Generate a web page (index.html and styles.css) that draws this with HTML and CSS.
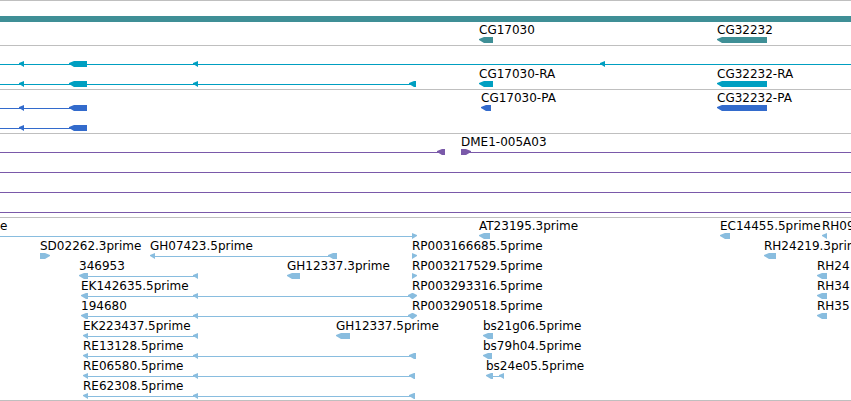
FILE: index.html
```html
<!DOCTYPE html>
<html lang="en">
<head>
<meta charset="utf-8">
<title>Genome tracks</title>
<link rel="stylesheet" href="styles.css">
</head>
<body>
<main class="browser">
  <section class="track gene">
    <div class="lane">
      <svg class="glyphs"><rect width="100%" height="6"/></svg>
    </div>
    <div class="lane">
      <span class="label" style="left:479px">CG17030</span>
      <span class="label" style="left:717px">CG32232</span>
      <svg class="glyphs"><path d="M479 3v-1l5-2H493v6H484zM717 3v-1l5-2H767v6H722z"/></svg>
    </div>
  </section>

  <section class="track transcript">
    <div class="lane">
      <svg class="glyphs"><rect y="3" width="100%" height="1"/><path d="M19 3v-1l5-2v6zM69 3v-1l5-2H87v6H74zM193 3v-1l5-2v6zM600 3v-1l5-2v6z"/></svg>
    </div>
    <div class="lane">
      <span class="label" style="left:479px">CG17030-RA</span>
      <span class="label" style="left:717px">CG32232-RA</span>
      <svg class="glyphs"><rect y="3" width="412" height="1"/><path d="M19 3v-1l5-2v6zM69 3v-1l5-2H87v6H74zM193 3v-1l5-2v6zM409 3v-1l5-2H416v6H414zM479 3v-1l5-2H493v6H484zM717 3v-1l5-2H767v6H722z"/></svg>
    </div>
  </section>

  <section class="track protein">
    <div class="lane">
      <span class="label" style="left:481px">CG17030-PA</span>
      <span class="label" style="left:717px">CG32232-PA</span>
      <svg class="glyphs"><rect y="3" width="72" height="1"/><path d="M19 3v-1l5-2v6zM69 3v-1l5-2H87v6H74zM481 3v-1l5-2H491v6H486zM717 3v-1l5-2H767v6H722z"/></svg>
    </div>
    <div class="lane">
      <svg class="glyphs"><rect y="3" width="72" height="1"/><path d="M19 3v-1l5-2v6zM69 3v-1l5-2H87v6H74z"/></svg>
    </div>
  </section>

  <section class="track insertion">
    <div class="lane">
      <span class="label" style="left:461px">DME1-005A03</span>
      <svg class="glyphs"><rect y="3" width="440" height="1"/><rect x="466" y="3" width="100%" height="1"/><path d="M437 3v-1l5-2H445v6H442zM461 0H466l5 2v1l-5 3H461z"/></svg>
    </div>
    <div class="lane"><svg class="glyphs"><rect y="3" width="100%" height="1"/></svg></div>
    <div class="lane"><svg class="glyphs"><rect y="3" width="100%" height="1"/></svg></div>
    <div class="lane"><svg class="glyphs"><rect y="3" width="100%" height="1"/></svg></div>
  </section>

  <section class="track est">
    <div class="lane">
      <span class="label" style="left:0px">e</span>
      <span class="label" style="left:479px">AT23195.3prime</span>
      <span class="label" style="left:720px">EC14455.5prime</span>
      <span class="label" style="left:822px">RH09</span>
      <svg class="glyphs"><rect y="3" width="414" height="1"/><path d="M412 0l5 2v1l-5 3zM479 3v-1l5-2H490v6H484zM720 3v-1l5-2H730v6H725zM822 3v-1l5-2v6z"/></svg>
    </div>
    <div class="lane">
      <span class="label" style="left:40px">SD02262.3prime</span>
      <span class="label" style="left:150px">GH07423.5prime</span>
      <span class="label" style="left:412px">RP003166685.5prime</span>
      <span class="label" style="left:764px">RH24219.3prime</span>
      <svg class="glyphs"><rect x="153" y="3" width="178" height="1"/><path d="M40 0H45l5 2v1l-5 3H40zM150 3v-1l5-2v6zM328 3v-1l5-2H337v6H333zM412 0l5 2v1l-5 3zM764 3v-1l5-2H776v6H769z"/></svg>
    </div>
    <div class="lane">
      <span class="label" style="left:79px">346953</span>
      <span class="label" style="left:287px">GH12337.3prime</span>
      <span class="label" style="left:412px">RP003217529.5prime</span>
      <span class="label" style="left:817px">RH24</span>
      <svg class="glyphs"><rect x="84" y="3" width="112" height="1"/><path d="M79 3v-1l5-2H88v6H84zM193 3v-1l5-2v6zM287 3v-1l5-2H300v6H292zM412 0l5 2v1l-5 3zM817 3v-1l5-2H827v6H822z"/></svg>
    </div>
    <div class="lane">
      <span class="label" style="left:81px">EK142635.5prime</span>
      <span class="label" style="left:412px">RP003293316.5prime</span>
      <span class="label" style="left:817px">RH34</span>
      <svg class="glyphs"><rect x="84" y="3" width="328" height="1"/><path d="M81 3v-1l5-2H88v6H86zM193 3v-1l5-2v6zM408 3v-1l4-2h1l4 2v1l-4 3h-1zM817 3v-1l5-2H827v6H822z"/></svg>
    </div>
    <div class="lane">
      <span class="label" style="left:81px">194680</span>
      <span class="label" style="left:412px">RP003290518.5prime</span>
      <span class="label" style="left:817px">RH35</span>
      <svg class="glyphs"><rect x="84" y="3" width="328" height="1"/><path d="M81 3v-1l5-2H88v6H86zM193 3v-1l5-2v6zM408 3v-1l4-2h1l4 2v1l-4 3h-1zM817 3v-1l5-2H827v6H822z"/></svg>
    </div>
    <div class="lane">
      <span class="label" style="left:83px">EK223437.5prime</span>
      <span class="label" style="left:336px">GH12337.5prime</span>
      <span class="label" style="left:483px">bs21g06.5prime</span>
      <svg class="glyphs"><rect x="86" y="3" width="110" height="1"/><path d="M83 3v-1l5-2v6zM193 3v-1l5-2v6zM336 3v-1l5-2H350v6H341zM483 3v-1l5-2H493v6H488z"/></svg>
    </div>
    <div class="lane">
      <span class="label" style="left:83px">RE13128.5prime</span>
      <span class="label" style="left:483px">bs79h04.5prime</span>
      <svg class="glyphs"><rect x="86" y="3" width="326" height="1"/><path d="M83 3v-1l5-2v6zM193 3v-1l5-2v6zM409 3v-1l5-2H416v6H414zM483 3v-1l5-2H492v6H488z"/></svg>
    </div>
    <div class="lane">
      <span class="label" style="left:83px">RE06580.5prime</span>
      <span class="label" style="left:486px">bs24e05.5prime</span>
      <svg class="glyphs"><rect x="86" y="3" width="326" height="1"/><rect x="490" y="3" width="12" height="1"/><path d="M83 3v-1l5-2v6zM193 3v-1l5-2v6zM409 3v-1l5-2H415v6H414zM486 3v-1l5-2H493v6H491zM499 3v-1l5-2v6z"/></svg>
    </div>
    <div class="lane">
      <span class="label" style="left:83px">RE62308.5prime</span>
      <svg class="glyphs"><rect x="86" y="3" width="326" height="1"/><path d="M83 3v-1l5-2v6zM193 3v-1l5-2v6zM409 3v-1l5-2H415v6H414z"/></svg>
    </div>
  </section>
</main>
</body>
</html>
```
FILE: styles.css
```css
body {
  margin: 0;
  background: #fff;
  color: #000;
  font: 12px/14px "DejaVu Sans", sans-serif;
}

.browser {
  overflow: hidden;
  border-bottom: 1px solid #bfbfbf;
}

.track {
  padding: 1px 0 2px;
  border-top: 1px solid #bfbfbf;
}

.lane {
  position: relative;
  display: flex;
  align-items: flex-end;
  height: 20px;
}

/* Labels sit at the start coordinate of their feature. */
.label {
  position: absolute;
  top: 0;
  white-space: nowrap;
}

.glyphs {
  display: block;
  width: 100%;
  height: 6px;
  fill: currentColor;
}

.gene {
  display: grid;
  gap: 1px;
}

.est {
  padding-bottom: 1px;
}

.gene .glyphs { color: #3f8f96; }
.transcript .glyphs { color: #009fc1; }
.protein .glyphs { color: #336bcc; }
.insertion .glyphs { color: #7a59a9; }
.est .glyphs { color: #89bddf; }
```
